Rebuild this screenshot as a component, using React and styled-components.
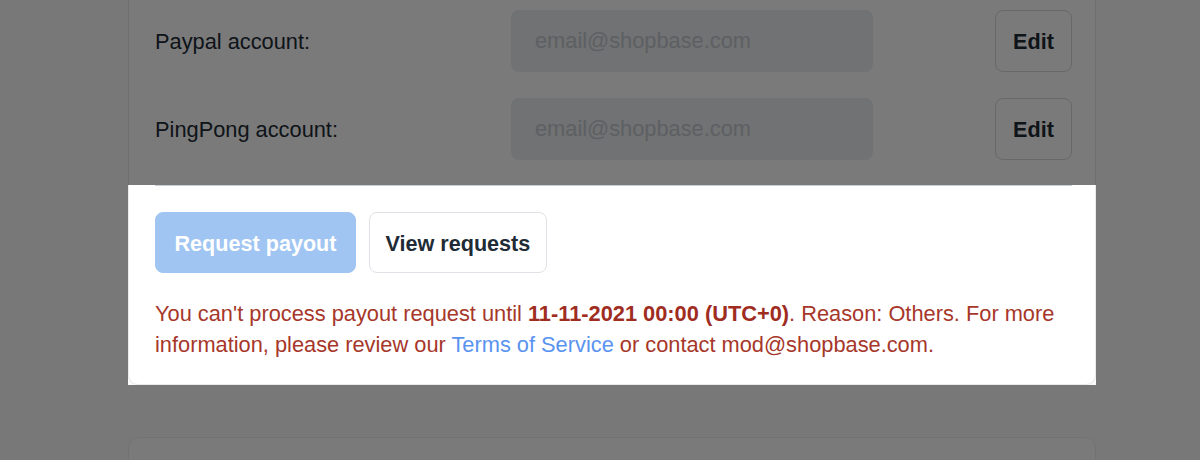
import React from "react";
import styled, { createGlobalStyle } from "styled-components";

const GlobalStyle = createGlobalStyle`
  html, body {
    margin: 0;
    padding: 0;
    background: #fafafa;
    font-family: "Liberation Sans", Arial, sans-serif;
    font-size: 21.8px;
    color: #212b36;
  }
`;

const Page = styled.div`
  display: flow-root;
  width: 1200px;
  height: 460px;
  padding-left: 128px;
  box-sizing: border-box;
  overflow: hidden;
`;

const Card = styled.div`
  width: 968px;
  box-sizing: border-box;
  background: #ffffff;
  border: 1px solid #e8e9eb;
  border-radius: 10px;
  margin-top: ${(p) => p.$offset || "0"};
`;

const Fields = styled.div`
  display: flex;
  flex-direction: column;
  gap: 26px;
  padding: 29px 23px 25px 26px;
`;

const FieldRow = styled.div`
  display: grid;
  grid-template-columns: 356px 362px 1fr;
  align-items: center;
`;

const Label = styled.span`
  line-height: 31px;
  padding-top: 1px;
  color: #212b36;
`;

const Input = styled.input`
  height: 62px;
  box-sizing: border-box;
  border: none;
  border-radius: 8px;
  background: #eceef1;
  padding: 0 24px;
  font: inherit;
  color: #212b36;
  outline: none;
  &::placeholder {
    color: #c2c8ce;
  }
`;

const Button = styled.button`
  height: ${(p) => p.$height || "61px"};
  box-sizing: border-box;
  padding: 2px ${(p) => p.$pad || "16px"} 0;
  border-radius: 8px;
  font-family: inherit;
  font-size: 21.6px;
  font-weight: 700;
  cursor: pointer;
  background: ${(p) => (p.$primary ? "#a0c5f2" : "#ffffff")};
  color: ${(p) => (p.$primary ? "#ffffff" : "#212b36")};
  border: 1px solid ${(p) => (p.$primary ? "#a0c5f2" : "#dfe2e6")};
`;

const EditButton = styled(Button)`
  justify-self: end;
  width: 77px;
  padding: 2px 0 0;
  border-color: #d8dadd;
`;

const Divider = styled.div`
  height: 1px;
  background: #c9ced4;
  margin: 0 23px 0 26px;
`;

const Actions = styled.div`
  position: relative;
  padding: 26px 23px 24px 26px;
`;

const Spotlight = styled.div`
  position: absolute;
  top: -1px;
  left: -1px;
  right: -1px;
  bottom: -1px;
  pointer-events: none;
  box-shadow: 0 0 0 3000px rgba(0, 0, 0, 0.52);
  z-index: 5;
`;

const ButtonGroup = styled.div`
  display: flex;
  gap: 13px;
`;

const Notice = styled.p`
  margin: 25px 0 0;
  line-height: 31px;
  color: #a6372a;
  strong {
    color: #9f2d1f;
  }
  a {
    color: #5a93ef;
    text-decoration: none;
  }
`;

const NextCard = styled(Card)`
  margin-top: 52px;
  height: 200px;
  border-color: #efefef;
`;

const accounts = ["Paypal account:", "PingPong account:"];

export default function App() {
  return (
    <>
      <GlobalStyle />
      <Page>
        <Card $offset="-20px">
          <Fields>
            {accounts.map((label) => (
              <FieldRow key={label}>
                <Label>{label}</Label>
                <Input placeholder="email@shopbase.com" disabled />
                <EditButton $height="62px">Edit</EditButton>
              </FieldRow>
            ))}
          </Fields>
          <Divider />
          <Actions>
            <ButtonGroup>
              <Button $primary $pad="18.5px">
                Request payout
              </Button>
              <Button $pad="15.5px">View requests</Button>
            </ButtonGroup>
            <Notice>
              You can't process payout request until{" "}
              <strong>11-11-2021 00:00 (UTC+0)</strong>. Reason: Others. For
              more information, please review our{" "}
              <a href="#terms">Terms of Service</a> or contact
              mod@shopbase.com.
            </Notice>
            <Spotlight />
          </Actions>
        </Card>
        <NextCard />
      </Page>
    </>
  );
}
